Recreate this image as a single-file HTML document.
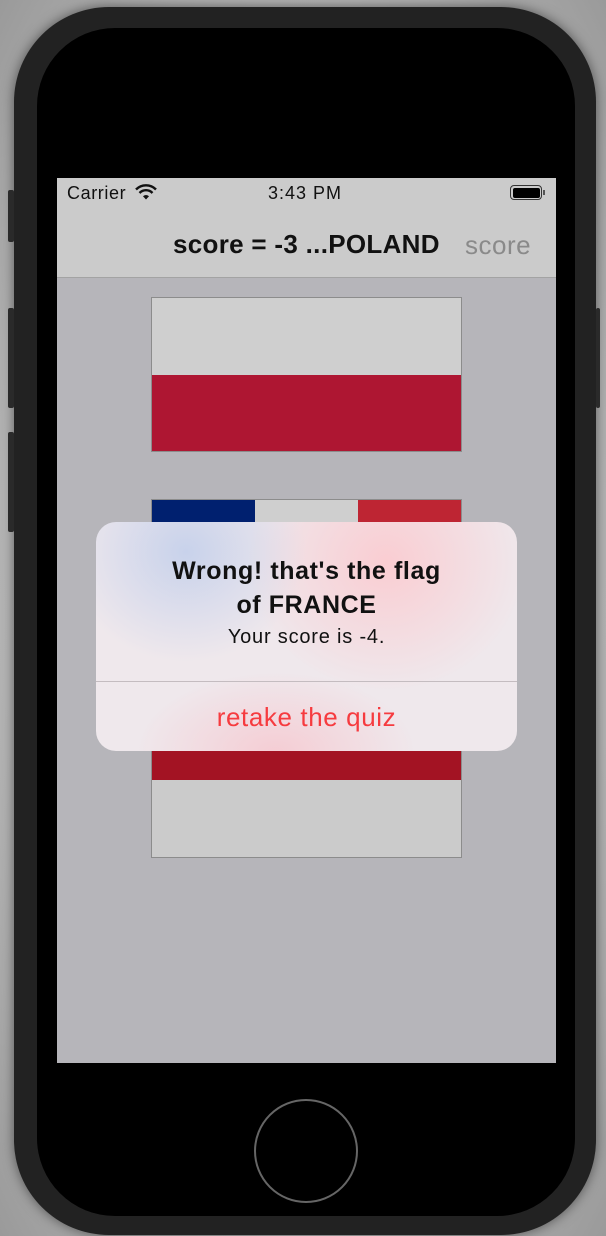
<!DOCTYPE html>
<html><head><meta charset="utf-8"><style>
html,body{margin:0;padding:0}
body{width:606px;height:1236px;background:#b8b8b8;position:relative;overflow:hidden;font-family:"Liberation Sans",sans-serif}
.bg{position:absolute;inset:0;background:radial-gradient(ellipse at center,#d0d0d0 0%,#bdbdbd 60%,#9a9a9a 100%)}
.phone{position:absolute;left:14px;top:7px;width:582px;height:1228px;background:#222;border-radius:95px;box-shadow:0 0 12px rgba(0,0,0,.5)}
.inner{position:absolute;left:37px;top:28px;width:538px;height:1188px;background:#000;border-radius:78px}
.btn{position:absolute;background:#2a2a2a;width:6px;border-radius:2px}
.screen{position:absolute;left:57px;top:178px;width:499px;height:885px;background:#b6b5ba;overflow:hidden}
.status{position:absolute;left:0;top:0;width:499px;height:99px;background:#cbcbcb;border-bottom:1px solid #a3a3a3}
.t{position:absolute;white-space:nowrap}
.flag{position:absolute;left:94px;width:309px;border:1px solid #8c8c8c}
.alert{position:absolute;left:39px;top:344px;width:421px;height:229px;border-radius:20px;overflow:hidden;
background:radial-gradient(ellipse 120px 110px at 90px 30px,rgba(200,210,235,1),rgba(200,210,235,0) 100%),
radial-gradient(ellipse 140px 130px at 290px 40px,rgba(250,205,210,1),rgba(250,205,210,0) 100%),
radial-gradient(ellipse 140px 80px at 180px 230px,rgba(245,205,212,1),rgba(245,205,212,0) 100%),#efe8ec}
.home{position:absolute;left:254px;top:1099px;width:100px;height:100px;border:2px solid #666;border-radius:50%}
</style></head><body>
<div class="bg"></div>
<div class="phone"></div>
<div class="btn" style="left:8px;top:190px;height:52px"></div>
<div class="btn" style="left:8px;top:308px;height:100px"></div>
<div class="btn" style="left:8px;top:432px;height:100px"></div>
<div class="btn" style="left:596px;top:308px;height:100px;width:4px"></div>
<div class="inner"></div>
<div class="home"></div>
<div class="screen">
 <div class="status">
  <div class="t" style="left:10px;top:5px;font-size:18px;letter-spacing:.6px;color:#111">Carrier</div>
  <svg style="position:absolute;left:78px;top:6px" width="22" height="16" viewBox="0 0 22 16"><path d="M1 5.5a14 14 0 0 1 20 0" stroke="#111" stroke-width="2.4" fill="none"/><path d="M4.5 9a9 9 0 0 1 13 0" stroke="#111" stroke-width="2.4" fill="none"/><path d="M8 12.3a4 4 0 0 1 6 0L11 15.5z" fill="#111"/></svg>
  <div class="t" style="left:211px;top:5px;font-size:18px;letter-spacing:1px;color:#111">3:43 PM</div>
  <div style="position:absolute;left:453px;top:7px;width:32px;height:15px;border:1.5px solid #333;border-radius:4px;box-sizing:border-box;padding:1.5px"><div style="background:#000;width:100%;height:100%;border-radius:2px"></div></div>
  <div style="position:absolute;left:486px;top:12px;width:2px;height:5px;background:#555"></div>
  <div class="t" style="left:116px;top:51px;font-size:26px;font-weight:bold;letter-spacing:.3px;color:#111">score = -3 ...POLAND</div>
  <div class="t" style="left:408px;top:52px;font-size:26px;letter-spacing:.5px;color:#8a8a8a">score</div>
 </div>
 <div class="flag" style="top:119px;height:153px;background:linear-gradient(#cfcfcf 0 77px,#ae1632 77px)"></div>
 <div class="flag" style="top:321px;height:357px;background:linear-gradient(90deg,#00206f 0 103px,#cfcfcf 103px 206px,#be2533 206px);"><div style="position:absolute;left:0;right:0;top:250px;height:30px;background:#a31323"></div><div style="position:absolute;left:0;right:0;top:280px;bottom:0;background:#cbcbcb"></div></div>
 <div class="alert">
  <div class="t" style="left:0;width:421px;text-align:center;top:32px;font-size:25px;font-weight:bold;letter-spacing:.6px;color:#111;line-height:34px;white-space:normal">Wrong! that's the flag<br>of FRANCE</div>
  <div class="t" style="left:0;width:421px;text-align:center;top:104px;font-size:20px;letter-spacing:.8px;color:#111">Your score is -4.</div>
  <div style="position:absolute;left:0;right:0;top:159px;height:1px;background:#c4bcc0"></div>
  <div class="t" style="left:0;width:421px;text-align:center;top:180px;font-size:26px;letter-spacing:.6px;color:#f63b3f">retake the quiz</div>
 </div>
</div>
</body></html>
